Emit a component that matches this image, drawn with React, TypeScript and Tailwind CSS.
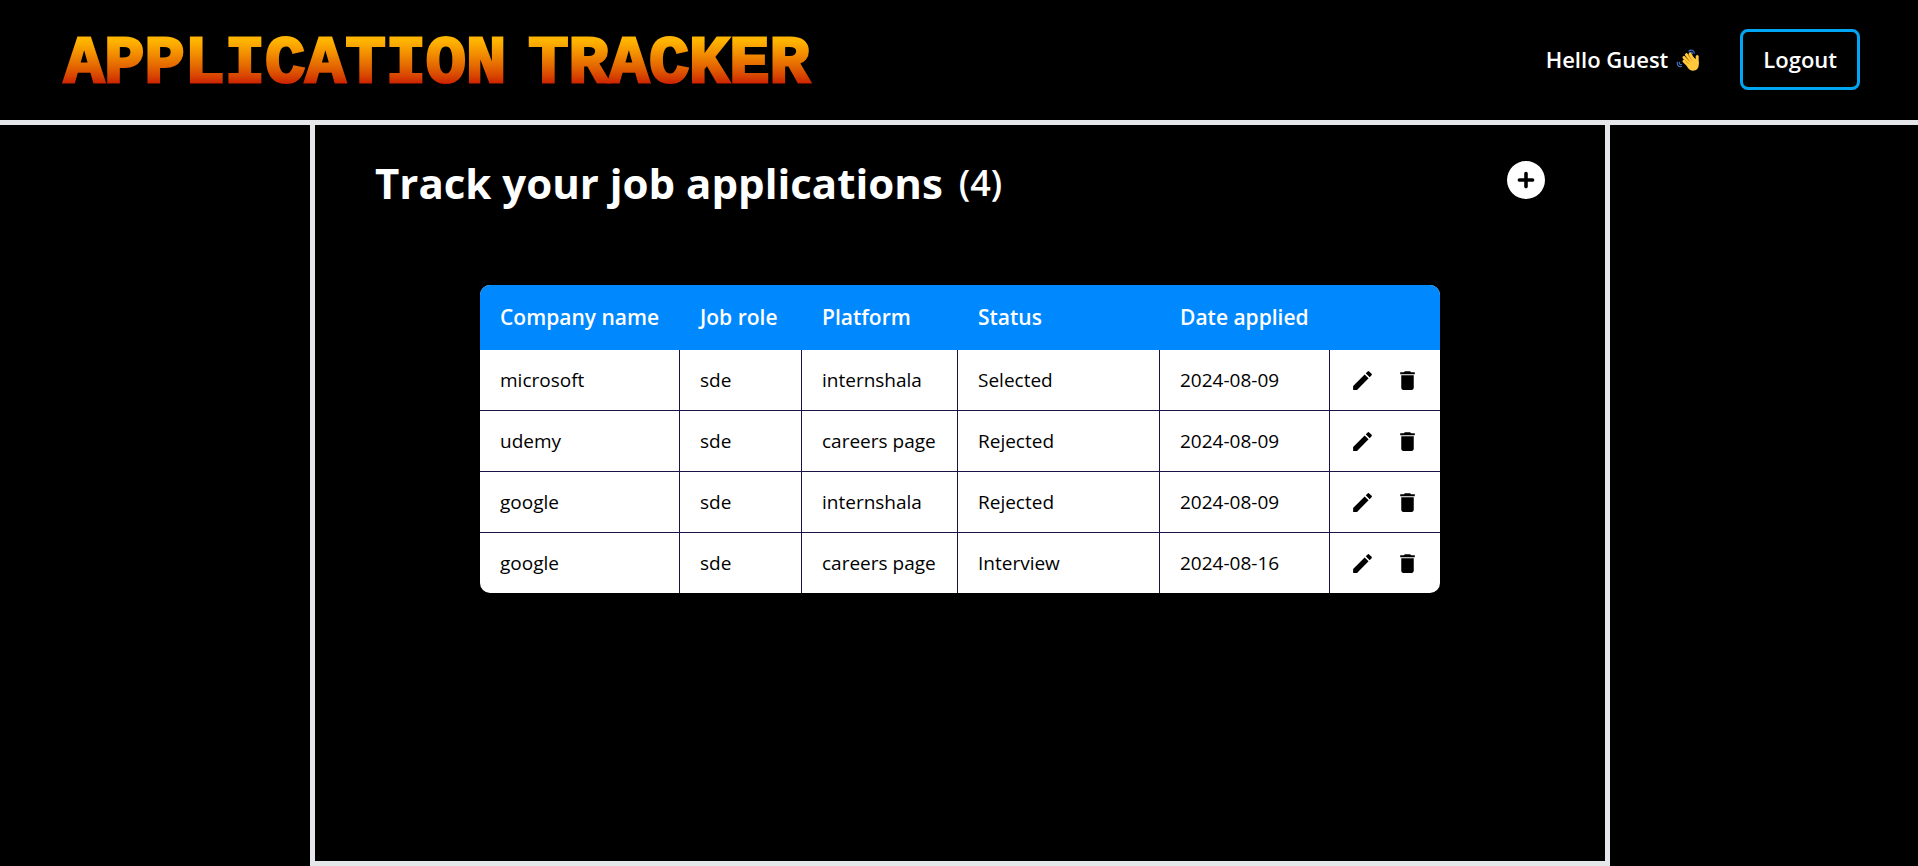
import React from "react";
import { MdDelete, MdModeEdit } from "react-icons/md";
import { FaCirclePlus } from "react-icons/fa6";

type Application = {
  company: string;
  role: string;
  platform: string;
  status: string;
  date: string;
};

const applications: Application[] = [
  { company: "microsoft", role: "sde", platform: "internshala", status: "Selected", date: "2024-08-09" },
  { company: "udemy", role: "sde", platform: "careers page", status: "Rejected", date: "2024-08-09" },
  { company: "google", role: "sde", platform: "internshala", status: "Rejected", date: "2024-08-09" },
  { company: "google", role: "sde", platform: "careers page", status: "Interview", date: "2024-08-16" },
];

const cell = "border-r border-b border-[#1a1446] pl-5 whitespace-nowrap group-last:border-b-0";

function WavingHand() {
  return (
    <svg viewBox="0 0 24 24" className="size-6" aria-hidden="true">
      <g fill="none" stroke="#3f73c8" strokeWidth="1.2" strokeLinecap="round">
        <path d="M13 3c1.8-1.8 5-.8 5.4 2.2" />
        <path d="M13.9 4.8c1.2-.9 2.4-.4 2.6.9" />
        <path d="M1.4 14.2c-.8 2.6 1.2 4.9 4 4.3" />
        <path d="M3.4 14.4c-.3 1.5.6 2.3 2 2.2" />
      </g>
      <g stroke="#ffc83d" strokeWidth="3" strokeLinecap="round">
        <path d="M8 13.2 13 18" />
        <path d="M8 9.4 14 16" />
        <path d="M10.4 6.6 16 14" />
        <path d="M14 6 18 13" />
        <path d="M21.2 8.6V15" />
      </g>
      <path d="M9.5 15.5 17 9l4 3 1.7 2.2c.6 3.9-.7 7-3.3 8.1-3 1.2-5.8 0-7.6-2.6z" fill="#ffc83d" />
      <g fill="none" stroke="#d67d00" strokeWidth=".6" strokeLinecap="round">
        <path d="m9 12 3.4 3.6" />
        <path d="m10 9.4 3.8 4.4" />
        <path d="m12.4 7.6 3.4 4.6" />
      </g>
    </svg>
  );
}

export default function App() {
  return (
    <div className="flex min-h-screen flex-col bg-black font-['Open_Sans','Noto_Sans',sans-serif] text-white">
      <header className="flex h-[125px] items-center justify-between border-b-5 border-gray-200 pr-[58px] pb-px pl-[60px]">
        <h1 className="flex gap-[22px] bg-linear-to-b from-[#ffb400] from-25% to-[#c80000] to-85% bg-clip-text px-1 pt-2 font-['Liberation_Mono',monospace] text-[67px] leading-[68px] font-bold text-transparent uppercase [-webkit-text-stroke:3px_transparent]">
          <span>Application</span> <span>Tracker</span>
        </h1>
        <div className="flex items-center gap-10">
          <p className="flex items-center gap-2 text-[22px] font-semibold">
            Hello Guest <WavingHand />
          </p>
          <button type="button" className="h-[61px] rounded-lg border-3 border-sky-500 px-5 text-[22px] font-semibold">
            Logout
          </button>
        </div>
      </header>
      <main className="flex flex-1 justify-center pl-[2px]">
        <section className="w-full max-w-[1300px] border-x-5 border-b-5 border-gray-200">
          <div className="flex items-start justify-between px-[60px] pt-[29px]">
            <h2 className="flex items-center gap-4 text-[42px] leading-[58px] font-bold">
              Track your job applications <span className="text-[36px] font-semibold">(4)</span>
            </h2>
            <button type="button" aria-label="Add application" className="mt-[7px]">
              <FaCirclePlus className="size-[38px]" />
            </button>
          </div>
          <div className="mx-auto mt-[73px] w-[960px] overflow-hidden rounded-[10px] bg-white text-black">
            <table className="w-full table-fixed border-separate border-spacing-0 text-left">
              <colgroup>
                <col className="w-[200px]" />
                <col className="w-[122px]" />
                <col className="w-[156px]" />
                <col className="w-[202px]" />
                <col className="w-[170px]" />
                <col className="w-[110px]" />
              </colgroup>
              <thead className="bg-[#0088ff] text-[21px] text-white">
                <tr className="h-[65px]">
                  {["Company name", "Job role", "Platform", "Status", "Date applied"].map((label) => (
                    <th key={label} scope="col" className="pl-5 font-semibold whitespace-nowrap">
                      {label}
                    </th>
                  ))}
                  <td />
                </tr>
              </thead>
              <tbody className="text-[19px] font-medium">
                {applications.map((item, index) => (
                  <tr key={index} className="group h-[61px] last:h-[60px]">
                    <td className={cell}>{item.company}</td>
                    <td className={cell}>{item.role}</td>
                    <td className={cell}>{item.platform}</td>
                    <td className={cell}>{item.status}</td>
                    <td className={cell}>{item.date}</td>
                    <td className="border-b border-[#1a1446] group-last:border-b-0">
                      <div className="flex items-center justify-center gap-5">
                        <button type="button" aria-label="Edit">
                          <MdModeEdit className="size-[25px]" />
                        </button>
                        <button type="button" aria-label="Delete">
                          <MdDelete className="size-[25px]" />
                        </button>
                      </div>
                    </td>
                  </tr>
                ))}
              </tbody>
            </table>
          </div>
        </section>
      </main>
    </div>
  );
}
